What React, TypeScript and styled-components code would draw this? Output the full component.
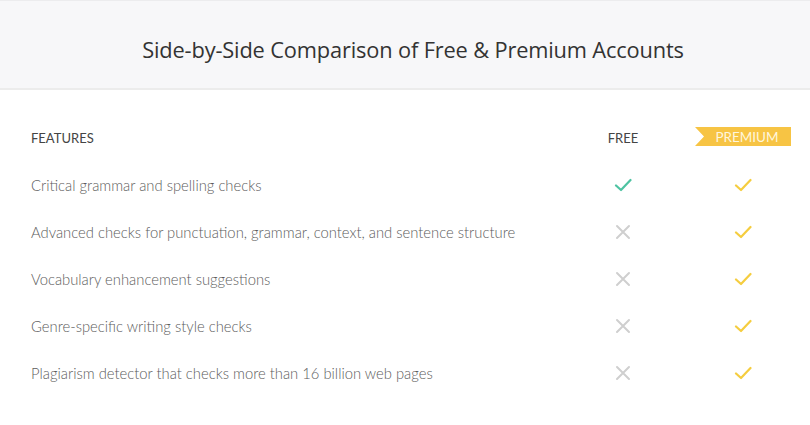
import styled, { createGlobalStyle } from "styled-components";

const Global = createGlobalStyle`
  html, body { margin: 0; padding: 0; background: #fff; }
  body { font-family: Lato, "Open Sans", sans-serif; }
`;

const Page = styled.div`
  width: 810px;
  height: 425px;
  background: #fff;
  overflow: hidden;
`;

const Header = styled.header`
  height: 78px;
  background: #f7f7f9;
  border-top: 1px solid #ececee;
  border-bottom: 2px solid #ececec;
  display: flex;
  align-items: center;
  justify-content: center;
  padding: 9px 0 0 16px;
  box-sizing: content-box;
`;

const Title = styled.h1`
  margin: 0;
  font-family: "Open Sans", sans-serif;
  font-weight: 400;
  font-size: 21.8px;
  color: #333;
  letter-spacing: -0.15px;
`;

const Table = styled.div`
  display: grid;
  grid-template-columns: 1fr 90px 96px;
  grid-auto-rows: 47px;
  column-gap: 27px;
  padding: 23px 19px 0 31px;
  align-items: center;
`;

const HeadCell = styled.div<{ $center?: boolean }>`
  font-size: 13px;
  font-weight: 400;
  color: #444;
  text-transform: uppercase;
  text-align: ${(p) => (p.$center ? "center" : "left")};
  padding-top: 2px;
`;

const Badge = styled.div`
  height: 19px;
  background: #f7c444;
  color: #fff6dc;
  font-size: 13.5px;
  display: flex;
  align-items: center;
  justify-content: center;
  padding-left: 8px;
  clip-path: polygon(0 0, 100% 0, 100% 100%, 0 100%, 9px 50%);
`;

const Feature = styled.div`
  font-size: 14.8px;
  font-weight: 300;
  color: #5c5c5c;
  white-space: nowrap;
  padding-top: 2px;
`;

const Mark = styled.div`
  display: flex;
  justify-content: center;
  padding-top: 2px;
`;

const Check = ({ color }: { color: string }) => (
  <svg width="18" height="14" viewBox="0 0 18 14">
    <path d="M2 7.5 L7 12 L16.5 2" fill="none" stroke={color} strokeWidth="2.2" strokeLinecap="round" strokeLinejoin="round" />
  </svg>
);

const Cross = () => (
  <svg width="16" height="16" viewBox="0 0 16 16">
    <path d="M2 2 L14 14 M14 2 L2 14" stroke="#cfcfcf" strokeWidth="2" strokeLinecap="round" />
  </svg>
);

const features = [
  { name: "Critical grammar and spelling checks", free: true },
  { name: "Advanced checks for punctuation, grammar, context, and sentence structure", free: false },
  { name: "Vocabulary enhancement suggestions", free: false },
  { name: "Genre-specific writing style checks", free: false },
  { name: "Plagiarism detector that checks more than 16 billion web pages", free: false },
];

export default function App() {
  return (
    <Page>
      <Global />
      <Header>
        <Title>Side-by-Side Comparison of Free &amp; Premium Accounts</Title>
      </Header>
      <Table>
        <HeadCell>Features</HeadCell>
        <HeadCell $center>Free</HeadCell>
        <Badge>PREMIUM</Badge>
        {features.map((f) => (
          <>
            <Feature key={f.name}>{f.name}</Feature>
            <Mark>{f.free ? <Check color="#4ec3a2" /> : <Cross />}</Mark>
            <Mark>
              <Check color="#f5cd3f" />
            </Mark>
          </>
        ))}
      </Table>
    </Page>
  );
}
